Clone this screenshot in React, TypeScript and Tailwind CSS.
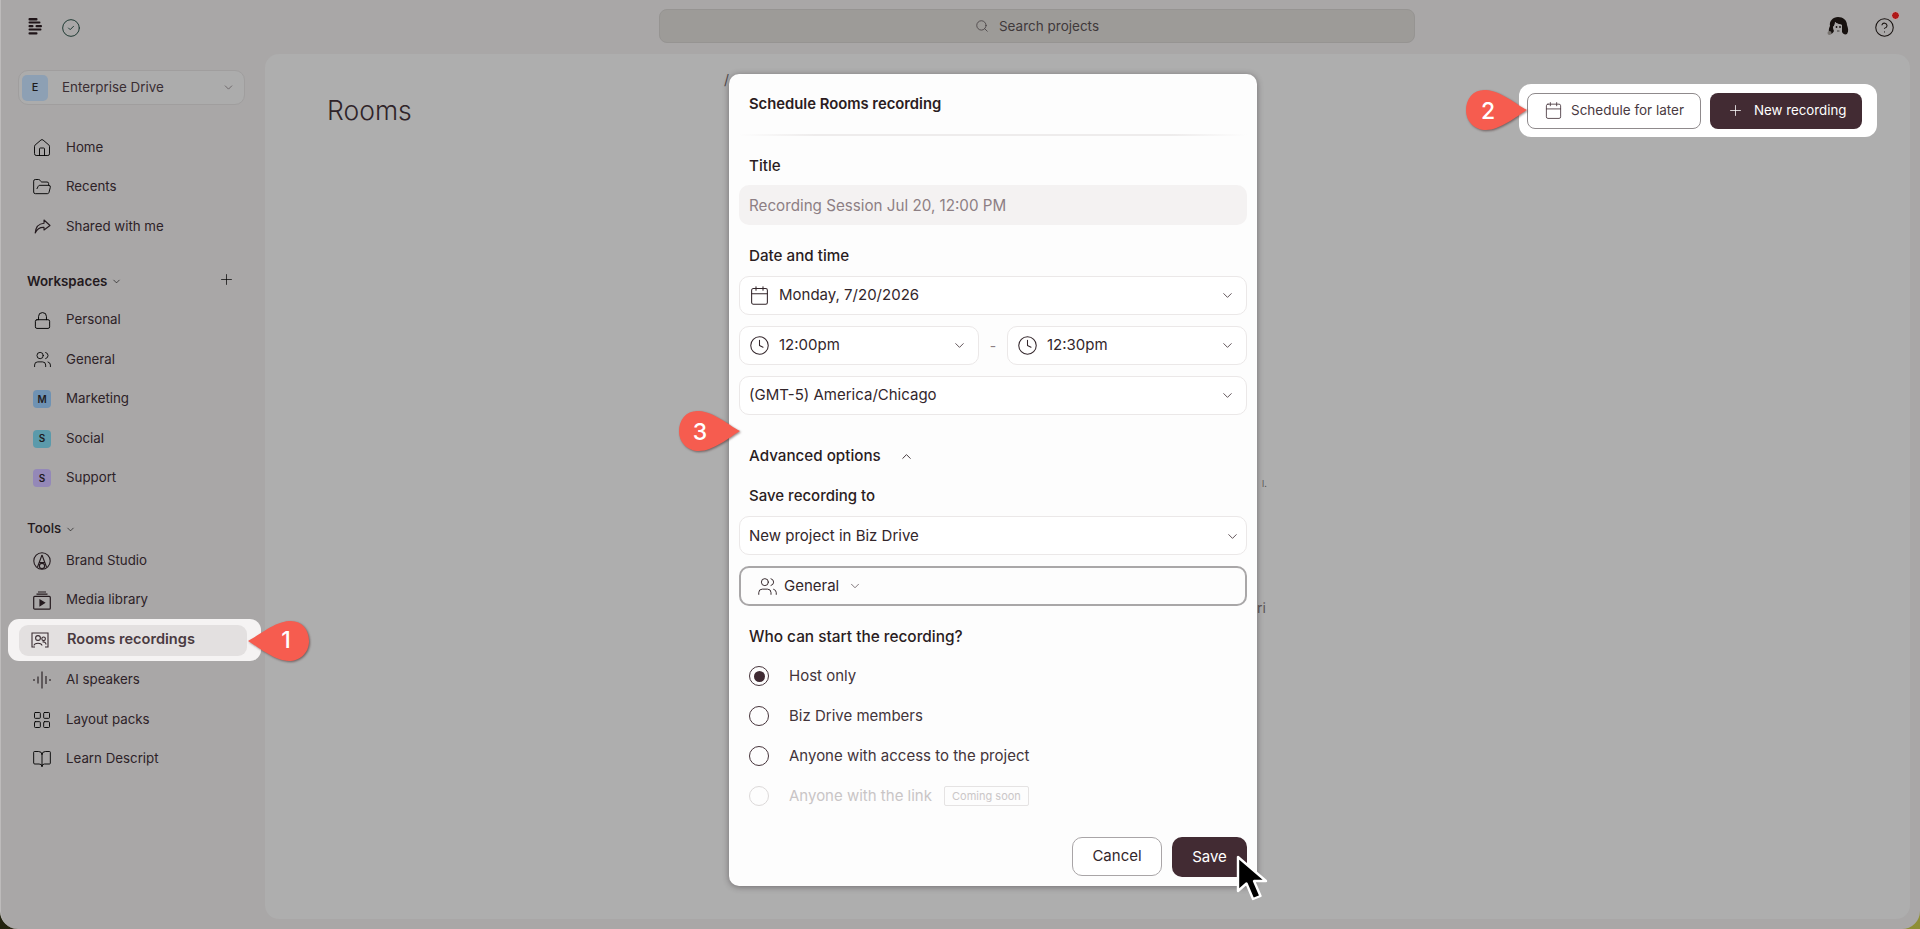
import React from "react";
import {
  House, FolderOpen, Lock, Users, Calendar, Clock, ChevronDown, ChevronUp, Plus, Search,
  LayoutGrid, BookOpen, CircleHelp, CircleCheck,
} from "lucide-react";

function Logo() {
  return (
    <svg width="15" height="17" viewBox="0 0 14 17" fill="#1f1418">
      <rect x="0" y="0" width="9" height="2.4" rx="1" />
      <rect x="0" y="3.6" width="12" height="2" rx="1" />
      <rect x="0" y="7" width="5" height="2.2" rx="1" />
      <rect x="7" y="7" width="6.5" height="2.2" rx="1" />
      <rect x="0" y="10.6" width="13" height="2" rx="1" />
      <rect x="0" y="14.2" width="9" height="2.4" rx="1" />
    </svg>
  );
}

function ShareIcon() {
  return (
    <svg width="17" height="15" viewBox="0 0 17 15" fill="none" stroke="#241a1e" strokeWidth="1.1" strokeLinejoin="round">
      <path d="M10 1 L16 6.5 L10 11 V8.4 C6 8.2 3.2 9.6 1.2 14 C1.6 8.6 4.6 4.6 10 4.2 Z" />
    </svg>
  );
}

function BrandIcon() {
  return (
    <svg width="18" height="18" viewBox="0 0 18 18" fill="none" stroke="#241a1e" strokeWidth="1.1">
      <circle cx="9" cy="9" r="8.2" />
      <path d="M9 3 L4.5 15 M9 3 L13.5 15 M6.2 10.5 H11.8" />
      <circle cx="9" cy="14" r="2.6" />
    </svg>
  );
}

function MediaIcon() {
  return (
    <svg width="18" height="19" viewBox="0 0 18 19" fill="none" stroke="#241a1e" strokeWidth="1.2">
      <path d="M5 1 H13 M3.5 3.2 H14.5" />
      <rect x="0.7" y="5.4" width="16.6" height="12.8" rx="1" />
      <path d="M7 9 L11.5 11.8 L7 14.6 Z" fill="#241a1e" />
    </svg>
  );
}

function RoomsIcon() {
  return (
    <svg width="18" height="16" viewBox="0 0 18 16" fill="none" stroke="#3a2d32" strokeWidth="1.1">
      <path d="M4 15 H1 V1 H17 V15 H14" />
      <circle cx="7" cy="6" r="2.4" />
      <circle cx="12.6" cy="6.8" r="1.8" />
      <path d="M3 13.5 C3.5 10.5 10.5 10.5 11 13.5 M11.5 10 C13 9.6 15 10.4 15 12.6" />
    </svg>
  );
}

function SpeakersIcon() {
  return (
    <svg width="18" height="18" viewBox="0 0 18 18" fill="none" stroke="#241a1e" strokeWidth="1.1">
      <path d="M1 8 V10 M5 5.5 V12.5 M9 0.5 V17.5 M13 5 V13 M17 8 V10" />
    </svg>
  );
}

function Avatar() {
  return (
    <svg width="22" height="20" viewBox="0 0 22 20">
      <path d="M3 18 C1 15 2 12 3 10 C2 5 6 1 11 1 C16 1 20 4 20 9 C21 12 22 15 20 18 C18 19 16 18 15 16 L15 9 C12 8 9.5 7.5 8 6 C8 9 7 10 6 11 L7 15 C6 17 5 18 3 18 Z" fill="#17110f" />
      <path d="M7 15 C8 18.5 14 18.5 15 15 L15 9 C12 8 9.5 7.5 8 6 C8 9 7 10 6 11 Z" fill="#a8a6a6" />
      <circle cx="9.5" cy="11" r="0.9" fill="#17110f" />
      <circle cx="13" cy="11" r="0.9" fill="#17110f" />
      <path d="M10 15 H12.5" stroke="#17110f" strokeWidth="0.7" />
      <circle cx="2.5" cy="17" r="2" fill="#77736f" />
    </svg>
  );
}

function Callout({ flip }: { flip?: boolean }) {
  return (
    <svg
      width="62"
      height="42"
      viewBox="0 0 62 42"
      className={flip ? "-scale-x-100 drop-shadow-[-1px_1px_1px_rgba(60,30,30,0.55)]" : "drop-shadow-[1px_1px_1px_rgba(60,30,30,0.55)]"}
    >
      <path d="M0 21 C10 16 26 2 41 1 C53 0 61 9 61 21 C61 33 52 41 41 41 C27 41 10 27 0 21 Z" fill="#f65c4f" />
    </svg>
  );
}

function NavRow({ icon, label }: { icon: React.ReactNode; label: string }) {
  return (
    <div className="flex h-[39.5px] items-center pl-[32px]">
      <span className="flex w-[18px] shrink-0 justify-center [&>svg]:shrink-0">{icon}</span>
      <span className="ml-[15px] text-[13.3px] text-[#2d2227]">{label}</span>
    </div>
  );
}

function Square({ letter, color }: { letter: string; color: string }) {
  return (
    <span className={`flex h-[18px] w-[18px] shrink-0 items-center justify-center rounded-[4px] text-[10px] font-semibold text-[#1e1a20] ${color}`}>
      {letter}
    </span>
  );
}

function FieldLabel({ children }: { children: React.ReactNode }) {
  return <div className="pl-[20px] text-[15.2px] font-medium leading-[20px] text-[#2a1c22]">{children}</div>;
}

function Select({ children, chevronRight = "pr-[11px]", className = "" }: { children: React.ReactNode; chevronRight?: string; className?: string }) {
  return (
    <div className={`flex h-[39px] items-center justify-between rounded-[10px] border border-[#ebe8e8] bg-white text-[15px] text-[#33262b] ${chevronRight} ${className}`}>
      {children}
      <ChevronDown size={15} strokeWidth={1.4} className="text-[#4b3d42]" />
    </div>
  );
}

function Radio({ label, checked, disabled, extra }: { label: string; checked?: boolean; disabled?: boolean; extra?: React.ReactNode }) {
  return (
    <div className="flex h-[40px] items-center pl-[20px]">
      <span
        className={`flex h-[20px] w-[20px] items-center justify-center rounded-full border-[1.5px] ${
          disabled ? "border-[#dcd9d9]" : "border-[#46343b]"
        }`}
      >
        {checked && <span className="h-[11px] w-[11px] rounded-full bg-[#3f2a32]" />}
      </span>
      <span className={`ml-[20px] text-[15px] ${disabled ? "text-[#c9c5c6]" : "text-[#43343a]"}`}>{label}</span>
      {extra}
    </div>
  );
}

export default function App() {
  return (
    <div className="relative h-[929px] w-[1920px] overflow-hidden bg-[linear-gradient(90deg,#23230f,#8f8f35)] font-['Inter',sans-serif]">
      <div className="flex h-[929px] flex-col rounded-b-[18px] border-l border-[#bdbbbb] bg-[#a9a7a7]">
        {/* top bar */}
        <header className="flex h-[54px] items-start">
          <div className="flex pl-[27px] pt-[18px]">
            <Logo />
            <CircleCheck size={20} strokeWidth={1.2} className="ml-[18px] text-[#1f3a33]" />
          </div>
          <div className="ml-[578px] mt-[9px] flex h-[34px] w-[756px] items-center justify-center rounded-[8px] border border-[#969492] bg-[#9d9b98] text-[13.5px] text-[#3f393b]">
            <Search size={14} strokeWidth={1.3} />
            <span className="ml-[10px]">Search projects</span>
          </div>
          <div className="ml-[412px] mt-[16px]">
            <Avatar />
          </div>
          <div className="relative ml-[25px] mt-[17px]">
            <CircleHelp size={21} strokeWidth={1.2} className="text-[#17110f]" />
            <span className="absolute -right-[5px] -top-[6px] h-[9px] w-[9px] rounded-full border border-[#c4b8b8] bg-[#b01818]" />
          </div>
        </header>

        <div className="flex flex-1">
          {/* sidebar */}
          <aside className="w-[264px]">
            <div className="ml-[17px] mt-[16px] flex h-[35px] w-[227px] items-center rounded-[10px] border border-[#a09e9e] bg-[#acacac] pl-[3px] pr-[9px]">
              <span className="flex h-[26px] w-[26px] items-center justify-center rounded-[5px] bg-[#8da0b4] text-[11px] font-medium text-[#1c1a1c]">E</span>
              <span className="ml-[14px] flex-1 text-[13.4px] text-[#3a2e33]">Enterprise Drive</span>
              <ChevronDown size={13} strokeWidth={1.2} className="text-[#4f4549]" />
            </div>

            <div className="mt-[23px]">
              <NavRow icon={<House size={20} strokeWidth={1.1} />} label="Home" />
              <NavRow icon={<FolderOpen size={20} strokeWidth={1.1} />} label="Recents" />
              <NavRow icon={<ShareIcon />} label="Shared with me" />
            </div>

            <div className="mt-[23px] flex h-[24px] items-center pl-[26px] pr-[30px]">
              <span className="text-[13.3px] font-semibold text-[#241a1e]">Workspaces</span>
              <ChevronDown size={11} strokeWidth={1.3} className="ml-[4px]" />
              <Plus size={17} strokeWidth={1} className="ml-auto -translate-y-[2px]" />
            </div>
            <div className="mt-[7px]">
              <NavRow icon={<Lock size={19} strokeWidth={1.2} />} label="Personal" />
              <NavRow icon={<Users size={19} strokeWidth={1.1} />} label="General" />
              <NavRow icon={<Square letter="M" color="bg-[#6f92b3]" />} label="Marketing" />
              <NavRow icon={<Square letter="S" color="bg-[#5b9aab]" />} label="Social" />
              <NavRow icon={<Square letter="S" color="bg-[#9488b8]" />} label="Support" />
            </div>

            <div className="mt-[19px] flex h-[24px] items-center pl-[26px]">
              <span className="text-[13.3px] font-medium text-[#241a1e]">Tools</span>
              <ChevronDown size={11} strokeWidth={1.3} className="ml-[4px]" />
            </div>
            <div>
              <NavRow icon={<BrandIcon />} label="Brand Studio" />
              <NavRow icon={<MediaIcon />} label="Media library" />
              <div className="relative flex h-[40px] items-center pl-[30px]">
                <div className="absolute left-[7px] top-[-1px] h-[42px] w-[253px] rounded-[11px] bg-[#f5f3f3]" />
                <div className="absolute left-[18px] top-[5px] h-[31px] w-[228px] rounded-[9px] bg-[#e3e0e0]" />
                <span className="relative flex w-[18px] justify-center">
                  <RoomsIcon />
                </span>
                <span className="relative ml-[18px] text-[14.6px] font-semibold text-[#4a3a41]">Rooms recordings</span>
              </div>
              <div className="mt-[0.5px]">
                <NavRow icon={<SpeakersIcon />} label="AI speakers" />
                <NavRow icon={<LayoutGrid size={20} strokeWidth={1.1} />} label="Layout packs" />
                <NavRow icon={<BookOpen size={20} strokeWidth={1.1} />} label="Learn Descript" />
              </div>
            </div>
          </aside>

          {/* main */}
          <main className="mb-[10px] mr-[10px] flex-1 rounded-[14px] bg-[#aeaeae] pl-[62px] pt-[39px]">
            <h1 className="text-[26.5px] font-light leading-[34px] text-[#2f2429]">Rooms</h1>
          </main>
        </div>
      </div>

      {/* fragments of page content peeking past the dialog */}
      <span className="absolute left-[724px] top-[69px] text-[14px] text-[#4f494b]">/</span>
      <span className="absolute left-[1262px] top-[477px] text-[9px] text-[#5b5557]">l.</span>
      <span className="absolute left-[1257px] top-[597px] text-[14px] text-[#5b5557]">ri</span>

      {/* annotated action buttons */}
      <div className="absolute left-[1519px] top-[84px] flex h-[53px] w-[358px] items-center rounded-[12px] bg-white pl-[8px]">
        <div className="flex h-[36px] w-[174px] items-center rounded-[8px] border border-[#8f8a8c] pl-[16px] text-[13.5px] text-[#4a3a41]">
          <Calendar size={19} strokeWidth={1.1} />
          <span className="ml-[8px]">Schedule for later</span>
        </div>
        <div className="ml-[9px] flex h-[36px] w-[152px] items-center rounded-[8px] bg-[#422b33] pl-[17px] text-[13.3px] text-white">
          <Plus size={17} strokeWidth={1.1} />
          <span className="ml-[10px]">New recording</span>
        </div>
      </div>

      {/* dialog */}
      <div
        role="dialog"
        className="absolute left-[729px] top-[74px] h-[812px] w-[528px] rounded-[10px] bg-[#fdfdfd] pl-[10px] pr-[10px] shadow-[0_1px_6px_rgba(40,30,35,0.45)]"
      >
        <div className="pl-[10px] pt-[21px] text-[14.8px] font-semibold leading-[18px] text-[#2a1c22]">Schedule Rooms recording</div>
        <div className="mt-[21px] h-[2px] bg-[linear-gradient(90deg,transparent,#eeecec_15%,#eeecec_85%,transparent)]" />

        <div className="-ml-[10px] mt-[20px]">
          <FieldLabel>Title</FieldLabel>
        </div>
        <div className="mt-[9px] flex h-[40px] items-center rounded-[10px] bg-[#f4f2f2] pl-[10px] pt-[2px] text-[15.2px] text-[#8d7f84]">
          Recording Session Jul 20, 12:00 PM
        </div>

        <div className="-ml-[10px] mt-[21px]">
          <FieldLabel>Date and time</FieldLabel>
        </div>
        <Select className="mt-[10px] pl-[9px]">
          <span className="flex items-center">
            <Calendar size={21} strokeWidth={1.2} />
            <span className="ml-[9px]">Monday, 7/20/2026</span>
          </span>
        </Select>
        <div className="mt-[11px] flex items-center justify-between">
          <Select className="w-[240px] pl-[9px]">
            <span className="flex items-center">
              <Clock size={21} strokeWidth={1.2} />
              <span className="ml-[9px]">12:00pm</span>
            </span>
          </Select>
          <span className="text-[14px] text-[#8d7f84]">-</span>
          <Select className="w-[240px] pl-[9px]">
            <span className="flex items-center">
              <Clock size={21} strokeWidth={1.2} />
              <span className="ml-[9px]">12:30pm</span>
            </span>
          </Select>
        </div>
        <Select className="mt-[11px] pl-[9px]">
          <span>(GMT-5) America/Chicago</span>
        </Select>

        <div className="mt-[31px] flex h-[20px] items-center pl-[10px]">
          <span className="text-[15.2px] font-medium text-[#2a1c22]">Advanced options</span>
          <ChevronUp size={15} strokeWidth={1.5} className="ml-[18px] text-[#3a2d32]" />
        </div>
        <div className="-ml-[10px] mt-[20px]">
          <div className="pl-[20px] text-[15px] font-medium leading-[20px] text-[#2a1c22]">Save recording to</div>
        </div>
        <Select className="mt-[10px] pl-[9px] pt-[1px]" chevronRight="pr-[6px]">
          <span>New project in Biz Drive</span>
        </Select>
        <div className="mt-[11px] flex h-[40px] items-center rounded-[10px] border-2 border-[#a9a7a8] pl-[16px] text-[15px] text-[#33262b]">
          <Users size={21} strokeWidth={1.1} />
          <span className="ml-[6px]">General</span>
          <ChevronDown size={14} strokeWidth={1.3} className="ml-[9px] text-[#5a4d52]" />
        </div>

        <div className="-ml-[10px] mt-[21px]">
          <div className="pl-[20px] text-[15.4px] font-medium leading-[20px] text-[#2a1c22]">Who can start the recording?</div>
        </div>
        <div className="-ml-[10px] mt-[9px]">
          <Radio label="Host only" checked />
          <Radio label="Biz Drive members" />
          <Radio label="Anyone with access to the project" />
          <Radio
            label="Anyone with the link"
            disabled
            extra={
              <span className="ml-[12px] flex h-[20px] w-[85px] items-center justify-center rounded-[2px] border border-[#e5e3e3] text-[11px] text-[#cbc7c8]">
                Coming soon
              </span>
            }
          />
        </div>

        <div className="mt-[21px] flex justify-end">
          <button className="flex h-[39px] w-[90px] items-center justify-center rounded-[10px] border border-[#a9a5a7] bg-white text-[15px] text-[#33262b]">Cancel</button>
          <button className="ml-[10px] flex h-[40px] w-[75px] items-center justify-center rounded-[10px] bg-[#422b33] text-[15px] text-white">Save</button>
        </div>
      </div>

      {/* annotation callouts */}
      <div className="absolute left-[248px] top-[620px]">
        <Callout />
        <span className="absolute left-[28px] top-[7px] w-[20px] text-center text-[23px] font-medium leading-[26px] text-white">1</span>
      </div>
      <div className="absolute left-[1465px] top-[89px]">
        <Callout flip />
        <span className="absolute left-[13px] top-[9px] w-[20px] text-center text-[23px] font-medium leading-[26px] text-white">2</span>
      </div>
      <div className="absolute left-[678px] top-[410px]">
        <Callout flip />
        <span className="absolute left-[12px] top-[9px] w-[20px] text-center text-[23px] font-medium leading-[26px] text-white">3</span>
      </div>

      {/* mouse pointer */}
      <svg className="absolute left-[1236px] top-[855px]" width="32" height="48" viewBox="0 0 32 48">
        <path d="M2 2 L2 36 L10.5 28.5 L17 44 L24.5 41 L18 26 L30 26 Z" fill="#000" stroke="#fff" strokeWidth="2.4" strokeLinejoin="round" />
      </svg>
    </div>
  );
}
